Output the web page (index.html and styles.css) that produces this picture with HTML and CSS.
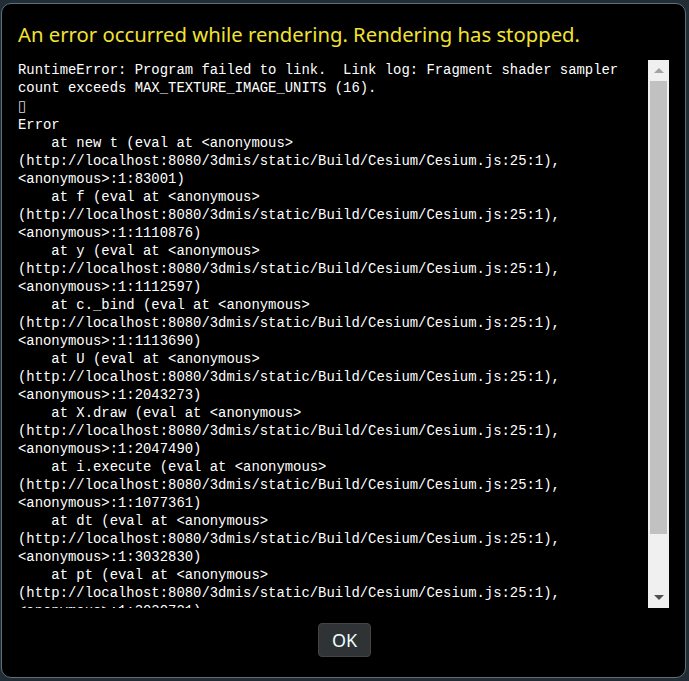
FILE: index.html
```html
<!DOCTYPE html>
<html lang="en">
<head>
  <meta charset="UTF-8">
  <title>Cesium Error</title>
  <link rel="stylesheet" href="styles.css">
</head>
<body>

<div class="error-panel">
  <div class="error-header">An error occurred while rendering. Rendering has stopped.</div>
  <div class="error-body">
<pre class="error-scroll">RuntimeError: Program failed to link.  Link log: Fragment shader sampler
count exceeds MAX_TEXTURE_IMAGE_UNITS (16).
<span class="tofu">&#x25AF;</span>
Error
    at new t (eval at &lt;anonymous&gt;
(http://localhost:8080/3dmis/static/Build/Cesium/Cesium.js:25:1),
&lt;anonymous&gt;:1:83001)
    at f (eval at &lt;anonymous&gt;
(http://localhost:8080/3dmis/static/Build/Cesium/Cesium.js:25:1),
&lt;anonymous&gt;:1:1110876)
    at y (eval at &lt;anonymous&gt;
(http://localhost:8080/3dmis/static/Build/Cesium/Cesium.js:25:1),
&lt;anonymous&gt;:1:1112597)
    at c._bind (eval at &lt;anonymous&gt;
(http://localhost:8080/3dmis/static/Build/Cesium/Cesium.js:25:1),
&lt;anonymous&gt;:1:1113690)
    at U (eval at &lt;anonymous&gt;
(http://localhost:8080/3dmis/static/Build/Cesium/Cesium.js:25:1),
&lt;anonymous&gt;:1:2043273)
    at X.draw (eval at &lt;anonymous&gt;
(http://localhost:8080/3dmis/static/Build/Cesium/Cesium.js:25:1),
&lt;anonymous&gt;:1:2047490)
    at i.execute (eval at &lt;anonymous&gt;
(http://localhost:8080/3dmis/static/Build/Cesium/Cesium.js:25:1),
&lt;anonymous&gt;:1:1077361)
    at dt (eval at &lt;anonymous&gt;
(http://localhost:8080/3dmis/static/Build/Cesium/Cesium.js:25:1),
&lt;anonymous&gt;:1:3032830)
    at pt (eval at &lt;anonymous&gt;
(http://localhost:8080/3dmis/static/Build/Cesium/Cesium.js:25:1),
&lt;anonymous&gt;:1:3030721)</pre>
    <div class="scrollbar">
      <div class="scroll-btn"><span class="arrow-up"></span></div>
      <div class="scroll-track">
        <div class="scroll-thumb"></div>
      </div>
      <div class="scroll-btn"><span class="arrow-down"></span></div>
    </div>
  </div>
  <div class="button-panel">
    <button class="cesium-button">OK</button>
  </div>
</div>

</body>
</html>
```

FILE: styles.css
```css
* {
  box-sizing: border-box;
}

html, body {
  margin: 0;
  height: 100%;
  background: #222c34;
  overflow: hidden;
}

body {
  padding: 3px 3px 3px 1px;
}

.error-panel {
  height: 675px;
  display: flex;
  flex-direction: column;
  padding: 16px 16px 19px;
  background: #000;
  border: 1px solid #5b707e;
  border-radius: 10px;
  color: #fff;
}

.error-header {
  font-family: 'Noto Sans', sans-serif;
  font-size: 20.3px;
  line-height: 28px;
  color: #f2e232;
  margin-bottom: 12px;
}

.error-body {
  display: flex;
  height: 548px;
}

.error-scroll {
  flex: 1;
  margin: 0;
  padding-top: 1px;
  overflow: hidden; /* la barra se dibuja aparte */
  font-family: 'Liberation Mono', 'DejaVu Sans Mono', monospace;
  font-size: 13.9px;
  line-height: 18px;
  white-space: pre;
}

.tofu {
  font-family: 'DejaVu Sans', sans-serif;
  font-size: 15px;
  color: #ddd;
}

.scrollbar {
  width: 21px;
  display: flex;
  flex-direction: column;
  background: #f0f0f0;
}

.scroll-btn {
  height: 21px;
  display: flex;
  justify-content: center;
  align-items: center;
}

.arrow-up {
  border-left: 5px solid transparent;
  border-right: 5px solid transparent;
  border-bottom: 5px solid #a3a3a3;
}

.arrow-down {
  border-left: 5px solid transparent;
  border-right: 5px solid transparent;
  border-top: 5px solid #505050;
}

.scroll-track {
  flex: 1;
  padding: 0 2px;
}

.scroll-thumb {
  height: 453px;
  background: #c1c1c1;
}

.button-panel {
  display: flex;
  justify-content: center;
  margin-top: 15px;
}

.cesium-button {
  height: 34px;
  padding: 0 13px;
  margin-left: 2px;
  background: #303336;
  border: 1px solid #444;
  border-radius: 4px;
  color: #edffff;
  font-family: 'Noto Sans', sans-serif;
  font-size: 18px;
  cursor: pointer;
}
```
